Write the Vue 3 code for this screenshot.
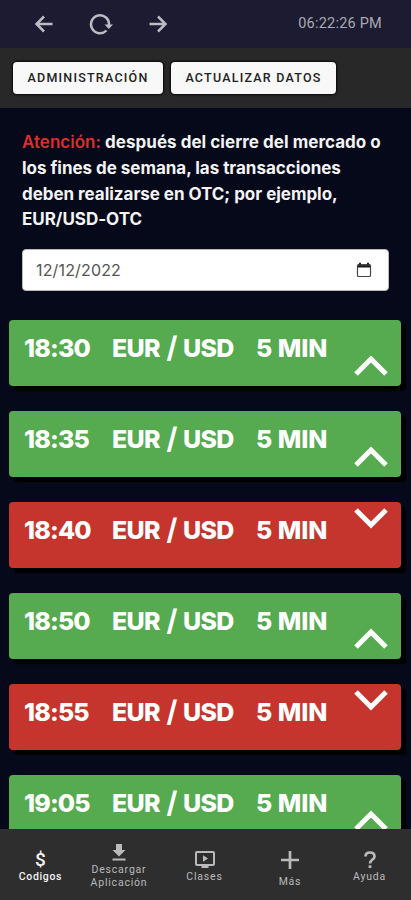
<script setup>
const signals = [
  { time: '18:30', dir: 'up' },
  { time: '18:35', dir: 'up' },
  { time: '18:40', dir: 'down' },
  { time: '18:50', dir: 'up' },
  { time: '18:55', dir: 'down' },
  { time: '19:05', dir: 'up' },
]
</script>

<template>
  <div class="screen">
    <header class="topbar">
      <svg class="ico" viewBox="0 0 20 20"><path d="M18.5 10H3M10 2.5 2.5 10l7.500 7.500" /></svg>
      <svg class="ico reload" viewBox="0 0 24 22"><path d="M17.500 17.500A9 9 0 1 1 20 12" /><path class="solid" d="M15.500 11.500h8.500l-4.200 4.500z" /></svg>
      <svg class="ico" viewBox="0 0 20 20"><path d="M1.500 10H17M10 2.500 17.500 10 10 17.500" /></svg>
      <span class="clock">06:22:26 PM</span>
    </header>

    <div class="toolbar">
      <button class="btn admin">ADMINISTRACIÓN</button>
      <button class="btn update">ACTUALIZAR DATOS</button>
    </div>

    <main class="content">
      <p class="notice">
        <span class="first"><b>Atención:</b> después del cierre del mercado o</span>
        <span>los fines de semana, las transacciones</span>
        <span>deben realizarse en OTC; por ejemplo,</span>
        <span>EUR/USD-OTC</span>
      </p>
      <div class="date">
        <span>12/12/2022</span>
        <svg viewBox="0 0 16 16" width="16" height="16"><path d="M3 .8h2v1.500h6V.8h2v1.500h1.500v3.200h-13V2.300H3z" fill="#1c1c1c" /><rect x="1.500" y="3" width="13" height="11.500" rx="1" fill="none" stroke="#444" stroke-width="1.200" /></svg>
      </div>

      <section class="list">
        <article v-for="s in signals" :key="s.time" class="card" :class="s.dir">
          <span class="time">{{ s.time }}</span>
          <span class="pair"><span>EUR</span><i>/</i><span>USD</span></span>
          <span class="dur">5 MIN</span>
          <svg class="chev" viewBox="0 0 34 22"><path :d="s.dir === 'up' ? 'M2 19 17 4l15 15' : 'M2 3l15 15L32 3'" /></svg>
        </article>
      </section>
    </main>

    <nav class="nav">
      <div class="item active n1">
        <span class="glyph">$</span>
        <span class="label">Codigos</span>
      </div>
      <div class="item n2">
        <svg width="14" height="17" viewBox="0 0 14 17"><path d="M4 0h6v6h3.500L7 12.500.5 6H4zM.5 14.500h13v2H.5z" fill="currentColor" /></svg>
        <span class="label">Descargar<br>Aplicación</span>
      </div>
      <div class="item n3">
        <svg width="20" height="18" viewBox="0 0 20 18"><rect x="1" y="1" width="18" height="13" rx="1" fill="none" stroke="currentColor" stroke-width="2" /><path d="M8 4.300v6.400l5-3.200zM6.500 14h7v3h-7z" fill="currentColor" /></svg>
        <span class="label">Clases</span>
      </div>
      <div class="item n4">
        <svg width="18" height="18" viewBox="0 0 18 18"><path d="M9 0v18M0 9h18" stroke="currentColor" stroke-width="2.700" /></svg>
        <span class="label">Más</span>
      </div>
      <div class="item n5">
        <svg width="12" height="18" viewBox="0 0 12 18"><path d="M1.500 5.500C1.500 2.800 3.300 1.500 6 1.500s4.500 1.500 4.500 3.900C10.500 8.500 6 8.500 6 12.500" fill="none" stroke="currentColor" stroke-width="2.700" /><path d="M4.600 14.300h2.800V17H4.600z" fill="currentColor" /></svg>
        <span class="label">Ayuda</span>
      </div>
    </nav>
  </div>
</template>

<style>
body { background: #050919; }
</style>

<style scoped>
* { box-sizing: border-box; }
.screen { width: 411px; height: 900px; display: flex; flex-direction: column; overflow: hidden; background: #050919; font-family: Roboto, sans-serif; }
.topbar { flex: none; height: 48px; background: #1c1b31; display: flex; align-items: center; padding: 0 29px 1px 34px; color: #bcbbc4; }
.ico { width: 20px; height: 20px; fill: none; stroke: currentColor; stroke-width: 2.500; margin-right: 35px; }
.reload { width: 24px; height: 22px; }
.reload .solid { fill: currentColor; stroke: none; }
.clock { margin-left: auto; font-size: 14.500px; letter-spacing: .22px; white-space: nowrap; color: #aaa9b2; }
.toolbar { flex: none; height: 60px; background: #282828; display: flex; gap: 8px; padding: 14px 13px 0; }
.btn { height: 32px; padding: 0 0 2px; border: 0; border-radius: 4px; background: #f8f8f8; color: #222; font: 500 12.500px Roboto, sans-serif; letter-spacing: 1.230px; white-space: nowrap; box-shadow: 0 0 2px 1px #080808; }
.admin { width: 150px; }
.update { width: 165px; }
.content { flex: 1; min-height: 0; overflow: hidden; padding-top: 22px; }
.notice { margin: 0 0 0 22px; font: 700 17px/25.800px Inter, sans-serif; letter-spacing: -.03px; color: #f4f4f6; white-space: nowrap; }
.notice > span { display: block; }
.notice .first { letter-spacing: .04px; }
.notice b { font-weight: 600; letter-spacing: .02px; color: #dc2e2b; }
.date { margin: 15.800px 22px 0; height: 42px; width: 367px; border-radius: 4px; background: #fff; border: 1px solid #bbb; display: flex; align-items: center; justify-content: space-between; padding: 0 16px 0 13px; font: 400 16px Inter, sans-serif; letter-spacing: .16px; color: #555; }
.list { padding: 29px 10px 0 9px; display: flex; flex-direction: column; gap: 25px; }
.card { flex: none; height: 66px; border-radius: 4px; display: grid; grid-template-columns: 88px 144px 98px 34px; padding-left: 15px; box-shadow: 5px 5px 1px 0 #000; color: #fff; font: 800 25px/57px Inter, sans-serif; white-space: nowrap; }
.time { letter-spacing: -.85px; }
.pair { display: grid; grid-template-columns: 51px 20px 54px; letter-spacing: -.7px; }
.pair i { font-style: normal; font-weight: 700; font-size: 28px; text-align: center; letter-spacing: 0; transform: translateX(-1px) scaleY(1.05); }
.dur { letter-spacing: -.05px; }
.up { background: #56aa50; }
.down { background: #c5352d; }
.chev { width: 34px; height: 22px; fill: none; stroke: #fff; stroke-width: 5; align-self: end; margin-bottom: 9px; }
.down .chev { align-self: start; margin: 5px 0 0; }
.nav { flex: none; height: 71px; background: #2e2e2e; display: grid; grid-template-columns: 81px 76px 95px 76px 83px; color: #bababa; }
.item { display: flex; flex-direction: column; align-items: center; }
.label { font-size: 10.500px; line-height: 13px; letter-spacing: .8px; text-align: center; }
.active { color: #f2f2f2; }
.active .label { font-weight: 500; letter-spacing: .65px; }
.glyph { font: 500 19px/19px Roboto, sans-serif; }
.n1, .n3, .n5 { padding-top: 22px; }
.n1 { padding-top: 21px; }
.n1 .label { margin-top: 2px; line-height: 11px; }
.n2 { padding-top: 15px; }
.n4 { padding-top: 22px; }
.n2 .label { margin-top: 2px; }
.n3 .label, .n5 .label { margin-top: 1px; }
.n4 .label { margin-top: 6px; }
</style>
